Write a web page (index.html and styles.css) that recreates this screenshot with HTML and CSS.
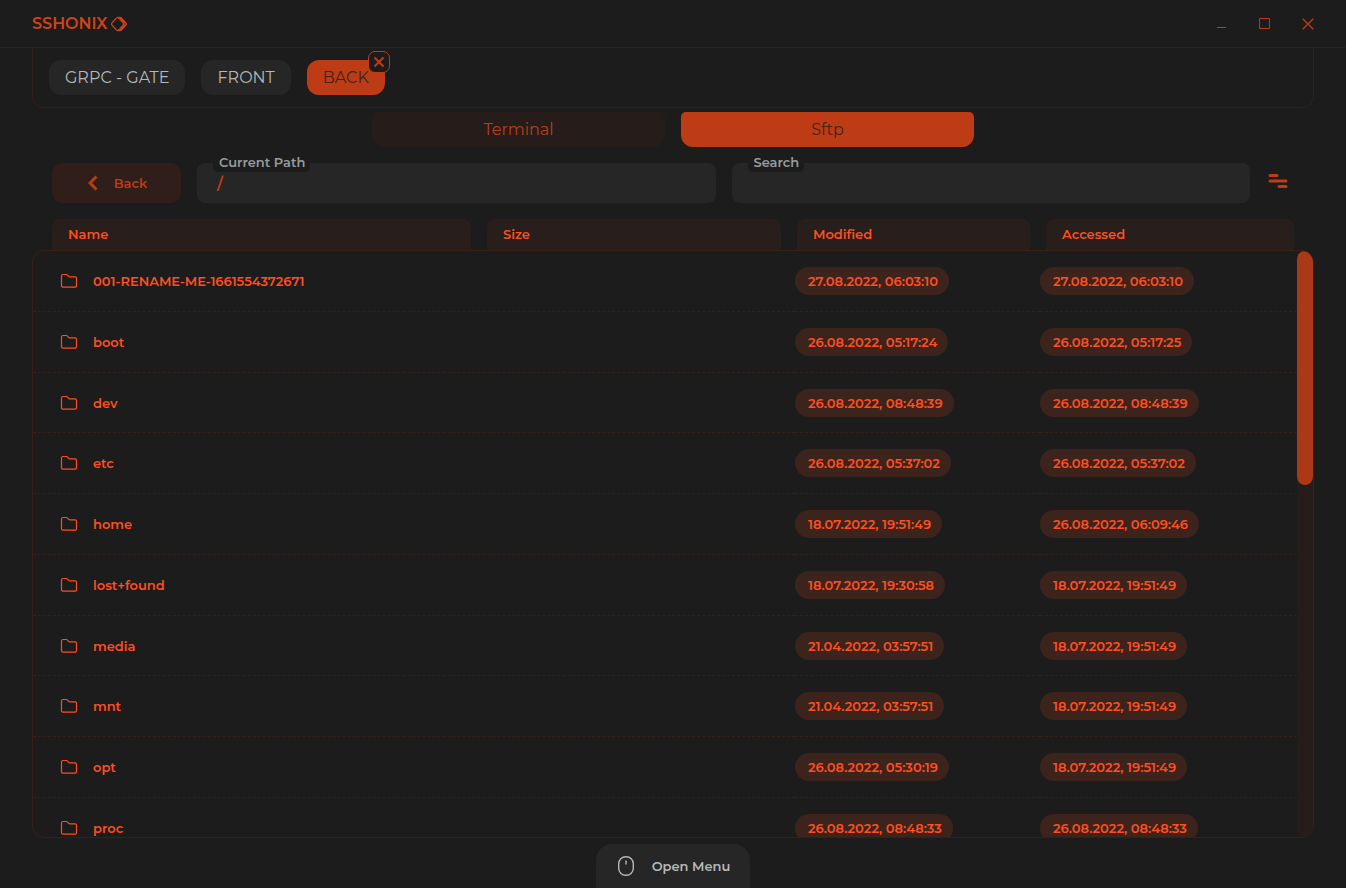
FILE: index.html
```html
<!DOCTYPE html>
<html lang="en">
<head>
<meta charset="utf-8">
<title>SSHONIX</title>
<link rel="stylesheet" href="styles.css">
</head>
<body>
<svg class="sprite" aria-hidden="true">
  <symbol id="folder" viewBox="0 0 18 16"><path d="M1.5 12.8V3Q1.5 1.5 3 1.5H6.2Q7 1.5 7.6 2.2L8.6 3.3Q9 3.8 9.8 3.8H15.2Q16.5 3.8 16.5 5.1V12.8Q16.5 14.2 15.1 14.2H2.9Q1.5 14.2 1.5 12.8Z" fill="none" stroke="currentColor" stroke-width="1.2"/></symbol>
</svg>
<header class="titlebar">
  <h1 class="brand">SSHONIX
    <svg width="16" height="16" viewBox="0 0 16 16" fill="none" stroke="currentColor" stroke-width="1.1" stroke-linejoin="round"><path d="M5.6 2Q6.6 1 7.6 2L12.3 7Q13.1 8 12.3 9L7.6 14Q6.6 15 5.6 14L.9 9Q.1 8 .9 7Z"/><path d="M6.6 1.3H9.2Q9.9 1.3 10.4 1.8L15.1 7Q15.8 8 15.1 9L10.4 14.2Q9.9 14.7 9.2 14.7H6.6M8.8 1.8L13.7 7Q14.4 8 13.7 9L8.8 14.2"/></svg>
  </h1>
  <div class="window-controls">
    <button aria-label="Minimize"><svg width="12" height="12" viewBox="0 0 12 12"><path d="M1 9.5H10"/></svg></button>
    <button aria-label="Maximize"><svg width="12" height="12" viewBox="0 0 12 12"><path d="M.5.5H10.5V10.5H.5Z"/></svg></button>
    <button aria-label="Close"><svg width="12" height="12" viewBox="0 0 12 12"><path d="M.7.7L11.3 11.3M11.3.7L.7 11.3" stroke-width="1.3"/></svg></button>
  </div>
</header>
<nav class="sessions">
  <button class="session">GRPC - GATE</button>
  <button class="session">FRONT</button>
  <div class="session-wrap">
    <button class="session active">BACK</button>
    <button class="session-close" aria-label="Close session"><svg width="12" height="12" viewBox="0 0 12 12"><path d="M1.5 1.5L10.5 10.5M10.5 1.5L1.5 10.5"/></svg></button>
  </div>
</nav>
<div class="modes">
  <button class="mode">Terminal</button>
  <button class="mode active">Sftp</button>
</div>
<main class="browser">
  <div class="toolbar">
    <button class="back"><svg width="10" height="16" viewBox="0 0 10 16"><path d="M8.5 1.5L2 8L8.5 14.5"/></svg>Back</button>
    <div class="field"><label for="path">Current Path</label><input id="path" type="text" value="/"></div>
    <div class="field"><label for="search">Search</label><input id="search" type="text"></div>
    <button class="sort" aria-label="View options"><svg width="20" height="16" viewBox="0 0 20 16"><path d="M2 2.5H9M2 8H18M11 13.5H18"/></svg></button>
  </div>
  <div class="headings">
    <div>Name</div><div>Size</div><div>Modified</div><div>Accessed</div>
  </div>
  <section class="panel">
    <div class="viewport">
      <table class="files" aria-label="Files">
        <colgroup><col class="col-name"><col class="col-modified"><col class="col-accessed"></colgroup>
        <tbody>
          <tr><td><span class="name"><svg><use href="#folder"/></svg>001-RENAME-ME-1661554372671</span></td><td><span class="date">27.08.2022, 06:03:10</span></td><td><span class="date">27.08.2022, 06:03:10</span></td></tr>
          <tr><td><span class="name"><svg><use href="#folder"/></svg>boot</span></td><td><span class="date">26.08.2022, 05:17:24</span></td><td><span class="date">26.08.2022, 05:17:25</span></td></tr>
          <tr><td><span class="name"><svg><use href="#folder"/></svg>dev</span></td><td><span class="date">26.08.2022, 08:48:39</span></td><td><span class="date">26.08.2022, 08:48:39</span></td></tr>
          <tr><td><span class="name"><svg><use href="#folder"/></svg>etc</span></td><td><span class="date">26.08.2022, 05:37:02</span></td><td><span class="date">26.08.2022, 05:37:02</span></td></tr>
          <tr><td><span class="name"><svg><use href="#folder"/></svg>home</span></td><td><span class="date">18.07.2022, 19:51:49</span></td><td><span class="date">26.08.2022, 06:09:46</span></td></tr>
          <tr><td><span class="name"><svg><use href="#folder"/></svg>lost+found</span></td><td><span class="date">18.07.2022, 19:30:58</span></td><td><span class="date">18.07.2022, 19:51:49</span></td></tr>
          <tr><td><span class="name"><svg><use href="#folder"/></svg>media</span></td><td><span class="date">21.04.2022, 03:57:51</span></td><td><span class="date">18.07.2022, 19:51:49</span></td></tr>
          <tr><td><span class="name"><svg><use href="#folder"/></svg>mnt</span></td><td><span class="date">21.04.2022, 03:57:51</span></td><td><span class="date">18.07.2022, 19:51:49</span></td></tr>
          <tr><td><span class="name"><svg><use href="#folder"/></svg>opt</span></td><td><span class="date">26.08.2022, 05:30:19</span></td><td><span class="date">18.07.2022, 19:51:49</span></td></tr>
          <tr><td><span class="name"><svg><use href="#folder"/></svg>proc</span></td><td><span class="date">26.08.2022, 08:48:33</span></td><td><span class="date">26.08.2022, 08:48:33</span></td></tr>
        </tbody>
      </table>
    </div>
    <div class="track"><div class="thumb"></div></div>
  </section>
</main>
<footer class="footer">
  <button class="menu"><svg width="18" height="22" viewBox="0 0 18 22"><rect x="1.7" y="1.7" width="14.6" height="18.6" rx="7"/><path d="M9 6V9"/></svg>Open Menu</button>
</footer>
</body>
</html>
```
FILE: styles.css
```css
:root {
  --bg: #1c1c1c;
  --surface: #262626;
  --accent: #bd3c16;
  --bright: #ff4e20;
  --line: #32201b;
  --muted: #b4b8b6;
}
* { box-sizing: border-box; }
body {
  margin: 0;
  height: 100vh;
  display: flex;
  flex-direction: column;
  overflow: hidden;
  background: var(--bg);
  color: var(--bright);
  font: 600 13px/16px Montserrat, Inter, sans-serif;
}
button, input { font: inherit; color: inherit; border: 0; margin: 0; }
button { padding: 0; background: none; cursor: pointer; }
svg { flex: none; display: block; }
.sprite { position: absolute; width: 0; height: 0; }

.titlebar {
  display: flex;
  align-items: center;
  justify-content: space-between;
  height: 48px;
  padding: 0 32px;
  border-bottom: 1px solid var(--line);
  color: #d24216;
}
.brand { display: flex; align-items: center; gap: 4px; margin: 0; font-size: 16px; font-weight: 600; }
.window-controls { display: flex; gap: 31px; color: var(--accent); }
.window-controls svg { fill: none; stroke: currentColor; }

.sessions {
  display: flex;
  gap: 16px;
  margin: 0 32px;
  padding: 12px 16px;
  border: 1px solid var(--line);
  border-top: 0;
  border-radius: 0 0 12px 12px;
}
.session {
  height: 35px;
  padding: 0 16px;
  border-radius: 12px;
  background: var(--surface);
  color: var(--muted);
  font-size: 16px;
  font-weight: 400;
}
.session-wrap { position: relative; }
.session.active { background: var(--accent); color: #42241b; }
.session-close {
  position: absolute;
  top: -9px;
  right: -5px;
  display: grid;
  place-items: center;
  width: 22px;
  height: 22px;
  border: 1px solid var(--accent);
  border-radius: 7px;
  background: var(--bg);
  color: var(--accent);
}
.session-close svg { fill: none; stroke: currentColor; stroke-width: 2; }

.modes {
  display: grid;
  grid-template-columns: 1fr 1fr;
  gap: 16px;
  width: 100%;
  max-width: 602px;
  margin: 4px auto 16px;
}
.mode {
  height: 35px;
  border-radius: 5px 5px 12px 12px;
  background: #261d1b;
  color: var(--accent);
  font-size: 16px;
  font-weight: 400;
}
.mode.active { background: var(--accent); color: #42241b; }

.browser { flex: 1; min-height: 0; display: flex; flex-direction: column; padding: 0 32px; }
.toolbar { display: flex; gap: 16px; margin: 0 20px 16px; }
.back {
  display: flex;
  align-items: center;
  justify-content: center;
  gap: 16px;
  width: 129px;
  height: 40px;
  padding-left: 2px;
  border-radius: 10px;
  background: #2f1e1a;
  color: var(--accent);
}
.back svg { fill: none; stroke: currentColor; stroke-width: 3; }
.field { position: relative; flex: 1; min-width: 0; }
.field label {
  position: absolute;
  top: -9px;
  left: 16px;
  padding: 0 5px 2px 6px;
  border-radius: 5px;
  background: var(--bg);
  color: #969c9c;
}
.field input {
  display: block;
  width: 100%;
  height: 40px;
  padding: 0 20px;
  border-radius: 8px;
  background: var(--surface);
  color: var(--accent);
  font-size: 16px;
}
.sort { display: grid; align-items: center; justify-content: start; width: 28px; height: 36px; padding-left: 2px; color: var(--accent); }
.sort svg { fill: none; stroke: currentColor; stroke-width: 3; stroke-linecap: round; }

.headings { display: grid; grid-template-columns: 419fr 294fr 233fr 248fr; gap: 16px; margin: 0 20px; }
.headings div { height: 31px; padding: 7px 16px; border-radius: 8px 8px 0 0; background: #281e1b; }

.panel {
  flex: 1;
  min-height: 0;
  display: flex;
  overflow: hidden;
  border: 1px solid #3a1f17;
  border-radius: 12px;
}
.viewport { flex: 1; min-width: 0; overflow: hidden; }
.files { width: 100%; table-layout: fixed; border-collapse: separate; border-spacing: 0; }
.col-modified { width: 245px; }
.col-accessed { width: 257px; }
.files td { height: 61px; padding: 0; border-bottom: 1px dashed var(--line); }
.files tr:nth-child(4n + 3) td { height: 60px; }
.name { display: flex; align-items: center; gap: 15px; padding-left: 27px; }
.name svg { width: 18px; height: 16px; }
.date {
  display: block;
  width: fit-content;
  padding: 6px 11px 6px 13px;
  border-radius: 14px;
  background: #3c241d;
}
.track { width: 16px; background: #261d1b; border-radius: 8px; }
.thumb { height: 40%; border-radius: 8px; background: #ab3817; }

.footer { display: flex; justify-content: center; margin-top: 6px; }
.menu {
  display: flex;
  align-items: center;
  justify-content: center;
  gap: 17px;
  height: 44px;
  padding: 0 20px 0 21px;
  border-radius: 16px 16px 0 0;
  background: var(--surface);
  color: var(--muted);
}
.menu svg { fill: none; stroke: currentColor; stroke-width: 1.4; stroke-linecap: round; }
```
